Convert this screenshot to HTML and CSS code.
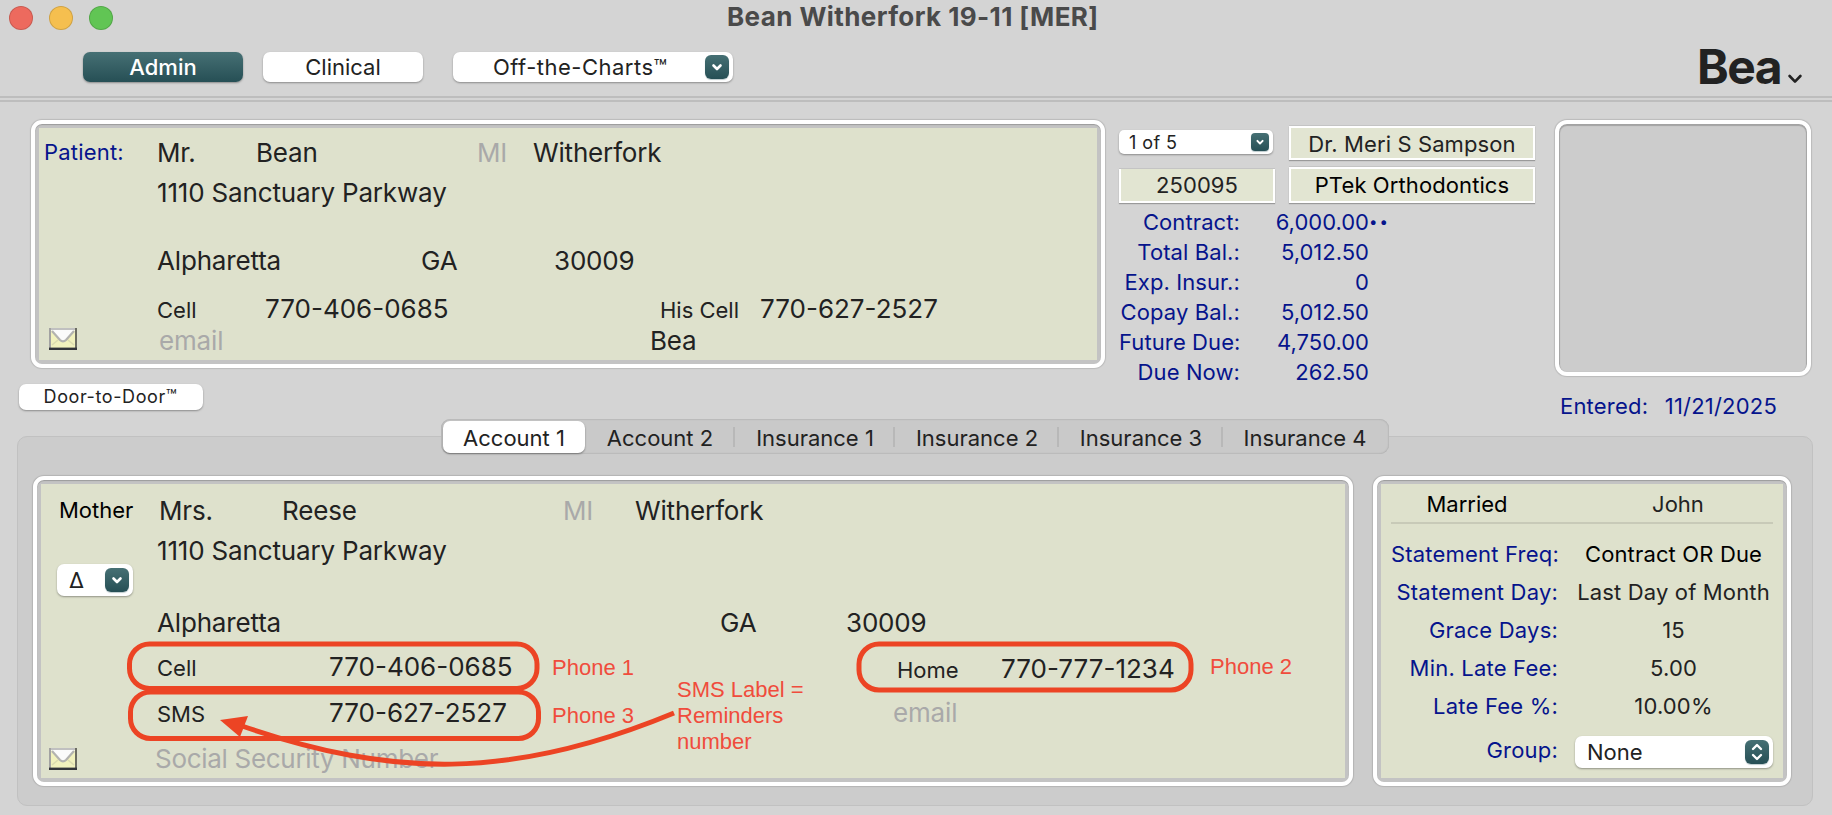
FILE: index.html
```html
<!DOCTYPE html>
<html lang="en">
  <head>
    <meta charset="UTF-8" />
    <title>Bean Witherfork 19-11 [MER]</title>
    <link rel="stylesheet" href="styles.css">
  </head>

  <body>
    <svg class="defs" width="0" height="0">
      <symbol id="chevron" viewBox="0 0 24 24">
        <path d="M8.500 10.500l3.500 3.500 3.500-3.500" fill="none" stroke="currentColor" stroke-width="2.6" stroke-linecap="round" stroke-linejoin="round" />
      </symbol>
      <symbol id="updown" viewBox="0 0 24 24">
        <path d="M8 9l4-4 4 4M8 15l4 4 4-4" fill="none" stroke="currentColor" stroke-width="2.4" stroke-linecap="round" stroke-linejoin="round" />
      </symbol>
      <symbol id="envelope" viewBox="0 0 28 22">
        <rect width="28" height="22" fill="#f1f1bd" />
        <path d="M2 2h24L16 13h-4z" fill="#fbfbfb" />
        <path d="M3 3l8 9q3 3 6 0l8-9" fill="none" stroke="#b3b3b0" stroke-width="2.2" />
        <path d="M3 17l6-5M25 17l-6-5" fill="none" stroke="#dcdcb0" stroke-width="1.6" />
        <path d="M0 1h28" stroke="#c0c0c0" stroke-width="2" />
        <path d="M1 0v22" stroke="#a2a2a2" stroke-width="2" />
        <path d="M27 0v22" stroke="#6c6c62" stroke-width="2" />
        <path d="M0 20.800h28" stroke="#33353a" stroke-width="2.4" />
      </symbol>
    </svg>

    <div class="window">
      <header class="titlebar">
        <div class="lights">
          <span class="light red"></span>
          <span class="light yellow"></span>
          <span class="light green"></span>
        </div>
        <h1>Bean Witherfork 19-11 [MER]</h1>
      </header>

      <nav class="toolbar">
        <button class="btn btn-active">Admin</button>
        <button class="btn">Clinical</button>
        <button class="btn btn-menu">
          <span>Off-the-Charts™</span>
          <svg class="arrow"><use href="#chevron" /></svg>
        </button>
        <div class="nickname">
          Bea
          <svg width="14" height="10" viewBox="0 0 14 10"><path d="M1.600 2L7 7.600 12.400 2" fill="none" stroke="#222" stroke-width="2.6" stroke-linecap="round" stroke-linejoin="round" /></svg>
        </div>
      </nav>

      <section class="top">
        <div class="card patient">
          <div class="panel">
            <div class="side">
              <span class="caption">Patient:</span>
              <svg class="envelope"><use href="#envelope" /></svg>
            </div>
            <div class="fields">
              <div class="row p-name">
                <span>Mr.</span>
                <span>Bean</span>
                <span class="hint">MI</span>
                <span>Witherfork</span>
              </div>
              <div class="row p-street"><span>1110 Sanctuary Parkway</span></div>
              <div class="row p-city">
                <span>Alpharetta</span>
                <span>GA</span>
                <span>30009</span>
              </div>
              <div class="row p-phone">
                <span class="small">Cell</span>
                <span class="num">770-406-0685</span>
                <span class="small">His Cell</span>
                <span class="num">770-627-2527</span>
              </div>
              <div class="row p-mail">
                <span class="hint">email</span>
                <span>Bea</span>
              </div>
            </div>
          </div>
        </div>

        <div class="summary">
          <div class="boxes">
            <div class="picker">
              <span>1 of 5</span>
              <svg class="arrow"><use href="#chevron" /></svg>
            </div>
            <div class="box">Dr. Meri S Sampson</div>
            <div class="box box-id">250095</div>
            <div class="box box-practice">PTek Orthodontics</div>
          </div>
          <dl class="money">
            <dt>Contract:</dt><dd>6,000.00<span class="dots">••</span></dd>
            <dt>Total Bal.:</dt><dd>5,012.50</dd>
            <dt>Exp. Insur.:</dt><dd>0</dd>
            <dt>Copay Bal.:</dt><dd>5,012.50</dd>
            <dt>Future Due:</dt><dd>4,750.00</dd>
            <dt>Due Now:</dt><dd>262.50</dd>
          </dl>
        </div>

        <div class="photo-col">
          <div class="photo"></div>
          <div class="entered"><span>Entered:</span><span>11/21/2025</span></div>
        </div>
      </section>

      <button class="btn btn-door">Door-to-Door™</button>

      <section class="accounts">
        <div class="tabs">
          <span class="tab tab-active">Account 1</span>
          <span class="tab tab-acc2">Account 2</span>
          <span class="tab tab-ins1">Insurance 1</span>
          <span class="tab">Insurance 2</span>
          <span class="tab">Insurance 3</span>
          <span class="tab">Insurance 4</span>
        </div>

        <div class="cards">
          <div class="card account">
            <div class="panel">
              <div class="side">
                <span class="relation">Mother</span>
                <div class="picker picker-delta">
                  <span>Δ</span>
                  <svg class="arrow"><use href="#chevron" /></svg>
                </div>
                <svg class="envelope"><use href="#envelope" /></svg>
              </div>
              <div class="fields">
                <div class="row a-name">
                  <span>Mrs.</span>
                  <span>Reese</span>
                  <span class="hint">MI</span>
                  <span>Witherfork</span>
                </div>
                <div class="row a-street"><span>1110 Sanctuary Parkway</span></div>
                <div class="row a-city">
                  <span>Alpharetta</span>
                  <span>GA</span>
                  <span>30009</span>
                </div>
                <div class="row a-phone">
                  <span class="small">Cell</span>
                  <span class="num">770-406-0685</span>
                  <span class="small low">Home</span>
                  <span class="num low">770-777-1234</span>
                </div>
                <div class="row a-sms">
                  <span class="small">SMS</span>
                  <span class="num">770-627-2527</span>
                  <span class="hint">email</span>
                </div>
                <div class="row a-ssn"><span class="hint">Social Security Number</span></div>
              </div>
            </div>
          </div>

          <div class="card billing">
            <div class="panel">
              <div class="marital">
                <span>Married</span>
                <span>John</span>
              </div>
              <dl class="terms">
                <dt>Statement Freq:</dt><dd class="strong">Contract OR Due</dd>
                <dt>Statement Day:</dt><dd>Last Day of Month</dd>
                <dt>Grace Days:</dt><dd>15</dd>
                <dt>Min. Late Fee:</dt><dd>5.00</dd>
                <dt>Late Fee %:</dt><dd>10.00%</dd>
              </dl>
              <div class="group">
                <span class="group-label">Group:</span>
                <div class="picker picker-group">
                  <span>None</span>
                  <svg class="arrow"><use href="#updown" /></svg>
                </div>
              </div>
            </div>
          </div>
        </div>
      </section>

      <!-- red markup drawn over the form -->
      <svg class="markup" width="1832" height="815" viewBox="0 0 1832 815">
        <g fill="none" stroke="#ec4424" stroke-width="5">
          <rect x="129.5" y="644" width="407.500" height="44.500" rx="20" />
          <rect x="130.500" y="692" width="408" height="46.500" rx="20" />
          <rect x="859" y="644" width="332" height="46" rx="20" />
          <path d="M242 726C390 777 510 781 674 713" />
        </g>
        <path d="M220 720l28-4-8 21z" fill="#ec4424" />
      </svg>
      <span class="note note-1">Phone 1</span>
      <span class="note note-2">Phone 2</span>
      <span class="note note-3">Phone 3</span>
      <span class="note note-sms">SMS Label =<br />Reminders<br />number</span>
    </div>
  </body>
</html>
```
FILE: styles.css
```css
:root {
  --window: #d4d4d4;
  --pane: #cccccc;
  --panel: #dee1cc;
  --ink: #222222;
  --navy: #06148c;
  --hint: #a9a9a9;
  --teal: linear-gradient(#467074, #264f55);
}

* {
  box-sizing: border-box;
}

html,
body {
  margin: 0;
  height: 100%;
  overflow: hidden;
}

body {
  background: var(--window);
  color: var(--ink);
  font-family: Inter, "Liberation Sans", sans-serif;
  font-size: 22px;
  white-space: nowrap;
}

.defs {
  position: absolute;
}

.window {
  position: relative;
  width: 1832px;
  height: 815px;
}

/* title bar */

.titlebar {
  display: flex;
  align-items: center;
  height: 36px;
}

.lights {
  display: flex;
  gap: 16px;
  width: 727px;
  padding-left: 9px;
}

.light {
  width: 24px;
  height: 24px;
  border-radius: 50%;
  border: 1px solid rgba(0, 0, 0, 0.15);
}

.red {
  background: #ed6a5e;
}

.yellow {
  background: #f5bf4f;
}

.green {
  background: #61c554;
}

.titlebar h1 {
  margin: 0 0 2px;
  font-size: 26px;
  line-height: 34px;
  font-weight: 700;
  letter-spacing: 0.4px;
  color: #4a4a4a;
}

/* toolbar */

.toolbar {
  display: flex;
  align-items: flex-start;
  height: 66px;
  padding: 16px 30px 0 83px;
  border-bottom: 2px solid #bdbdbd;
  background: linear-gradient(#bdbdbd, #bdbdbd) 0 60px / 100% 2px no-repeat;
}

.btn {
  width: 160px;
  height: 30px;
  margin: 0 20px 0 0;
  padding: 0;
  border: none;
  border-radius: 7px;
  background: #fff;
  box-shadow: 0 1px 2px rgba(0, 0, 0, 0.35);
  color: var(--ink);
  font: inherit;
  line-height: 30px;
}

.btn-active {
  background: var(--teal);
  color: #fff;
  font-weight: 500;
}

.btn-menu {
  display: flex;
  align-items: center;
  justify-content: space-between;
  width: 280px;
  margin-left: 10px;
  padding: 0 4px 0 40px;
  letter-spacing: 0.5px;
}

.arrow {
  flex: none;
  width: 24px;
  height: 24px;
  border-radius: 6px;
  background: var(--teal);
  box-shadow: 0 1px 1px rgba(38, 79, 85, 0.3);
  color: #fff;
}

.nickname {
  display: flex;
  align-items: flex-end;
  gap: 7px;
  height: 34px;
  margin-left: auto;
  font-size: 48px;
  font-weight: 700;
  line-height: 38px;
  letter-spacing: -1.6px;
}

.nickname svg {
  margin-bottom: 2px;
}

/* shared card look: white frame, grey gap, green panel */

.card {
  padding: 4px;
  border: 4px solid #fff;
  border-radius: 11px;
  background: #c3c3c3;
  box-shadow: 0 0 1px 1px rgba(0, 0, 0, 0.12), inset 0 1px 1px 0 rgba(0, 0, 0, 0.2);
}

.panel {
  height: 100%;
  background: var(--panel);
}

.row {
  display: flex;
  align-items: flex-start;
  height: 30px;
  font-size: 26px;
  line-height: 30px;
  letter-spacing: -0.17px;
}

.row > span {
  flex: none;
}

.small {
  font-size: 22px;
  line-height: 32px;
  letter-spacing: 0;
}

.num {
  letter-spacing: 0;
}

.low {
  padding-top: 2px;
}

.hint {
  color: var(--hint);
}

.envelope {
  width: 28px;
  height: 22px;
}

.top {
  display: flex;
  height: 276px;
  padding: 18px 21px 0 31px;
}

/* patient card */

.patient {
  width: 1074px;
  height: 248px;
}

.patient .panel,
.account .panel {
  display: flex;
}

.patient .side {
  display: flex;
  flex-direction: column;
  justify-content: space-between;
  width: 118px;
  padding: 9px 0 10px 5px;
}

.caption {
  color: var(--navy);
  line-height: 30px;
  letter-spacing: 0.2px;
}

.patient .envelope {
  margin-left: 5px;
}

.patient .fields {
  padding-top: 10px;
}

.p-name :nth-child(1) {
  width: 99px;
}

.p-name :nth-child(2) {
  width: 221px;
}

.p-name :nth-child(3) {
  width: 56px;
}

.p-street {
  margin-top: 10px;
}

.p-city {
  margin-top: 38px;
}

.p-city :nth-child(1) {
  width: 264px;
}

.p-city :nth-child(2) {
  width: 133px;
}

.p-phone {
  margin-top: 18px;
}

.p-phone :nth-child(1) {
  width: 108px;
}

.p-phone :nth-child(2) {
  width: 395px;
}

.p-phone :nth-child(3) {
  width: 100px;
}

.p-mail {
  margin-top: 2px;
}

.p-mail :nth-child(1) {
  width: 493px;
  padding-left: 2px;
}

/* balances */

.summary {
  width: 416px;
  margin-left: 14px;
  padding-top: 6px;
}

.boxes {
  display: grid;
  grid-template-columns: 156px 246px;
  grid-template-rows: 34px 36px;
  column-gap: 14px;
  row-gap: 7px;
}

.box {
  border: 2px solid #fff;
  background: #e2e5d2;
  box-shadow: 0 1px 1px 0 #9a9a9a, 0 -1px 0 #c4c4c4;
  line-height: 32px;
  text-align: center;
  letter-spacing: 0.1px;
}

/* the id field has no white edge on top */
.box-id {
  margin-top: 2px;
  border-top: none;
  line-height: 32px;
}

.box-practice {
  color: #000;
}

.picker {
  display: flex;
  align-items: center;
  justify-content: space-between;
  width: 154px;
  height: 24px;
  margin-top: 4px;
  padding: 0 4px 0 10px;
  border-radius: 5px;
  background: #fff;
  box-shadow: 0 1px 2px rgba(0, 0, 0, 0.35);
  font-size: 18px;
  letter-spacing: 0.4px;
}

.picker .arrow {
  width: 18px;
  height: 18px;
  border-radius: 4px;
}

.money {
  display: grid;
  grid-template-columns: 121px 129px;
  margin: 4px 0 0;
  color: var(--navy);
  line-height: 30px;
  text-align: right;
}

.money dd {
  position: relative;
  margin: 0;
}

.money dt {
  letter-spacing: 0.1px;
}

/* hangs past the right edge of the amount column */
.dots {
  position: absolute;
  left: 100%;
  font-size: 15px;
  letter-spacing: 2px;
}

.photo-col {
  width: 256px;
  margin-left: 20px;
}

.photo {
  height: 256px;
  border: 4px solid #fff;
  border-radius: 12px;
  background: var(--pane);
  box-shadow: 0 0 1px 1px rgba(0, 0, 0, 0.12), inset 0 1px 1px 1px rgba(0, 0, 0, 0.2);
}

.entered {
  display: flex;
  justify-content: space-between;
  padding: 15px 34px 0 5px;
  color: var(--navy);
  line-height: 30px;
  letter-spacing: 0.2px;
}

.btn-door {
  display: block;
  width: 184px;
  height: 26px;
  margin: 6px 0 0 19px;
  padding-right: 1px;
  font-size: 18px;
  line-height: 24px;
  letter-spacing: 0.6px;
}

/* tabs */

.accounts {
  height: 370px;
  margin: 26px 19px 0 17px;
  border: 1px solid #c1c1c1;
  border-radius: 10px;
  background: var(--pane);
}

.tabs {
  display: flex;
  width: 948px;
  height: 35px;
  margin: -18px 0 0 423px;
  padding: 2px;
  border-radius: 9px;
  background: #c9c9c9;
  box-shadow: inset 0 0 2px rgba(0, 0, 0, 0.25);
  line-height: 34px;
}

.tab {
  position: relative;
  width: 164px;
  text-align: center;
}

.tab-active {
  width: 142px;
  height: 32px;
  border-radius: 7px;
  background: #fff;
  box-shadow: 0 1px 2px rgba(0, 0, 0, 0.4);
}

.tab-acc2 {
  width: 150px;
}

.tab-ins1 {
  width: 160px;
}

.tab + .tab:not(:last-child)::after {
  content: "";
  position: absolute;
  right: 0;
  top: 6px;
  width: 2px;
  height: 20px;
  background: #b8b8b8;
}

.cards {
  display: flex;
  gap: 20px;
  height: 310px;
  margin: 22px 0 0 15px;
}

/* account card */

.account {
  width: 1320px;
}

.account .side {
  width: 116px;
  padding: 11px 0 0 8px;
}

.relation {
  display: block;
  padding-left: 10px;
  color: #000;
  line-height: 30px;
}

.picker-delta,
.picker-group {
  height: 32px;
  border-radius: 7px;
  font-size: 22px;
  letter-spacing: 0;
}

.picker-delta .arrow,
.picker-group .arrow {
  width: 24px;
  height: 24px;
  border-radius: 6px;
}

.picker-delta {
  width: 76px;
  margin: 39px 0 152px 8px;
  padding-left: 12px;
}

.account .fields {
  padding-top: 12px;
}

.a-name {
  padding-left: 2px;
}

.a-name :nth-child(1) {
  width: 123px;
}

.a-name :nth-child(2) {
  width: 281px;
}

.a-name :nth-child(3) {
  width: 72px;
}

.a-street {
  margin-top: 10px;
}

.a-city {
  margin-top: 42px;
}

.a-city :nth-child(1) {
  width: 563px;
}

.a-city :nth-child(2) {
  width: 126px;
}

.a-phone {
  margin-top: 14px;
}

.a-phone :nth-child(1),
.a-sms :nth-child(1) {
  width: 172px;
}

.a-phone :nth-child(2) {
  width: 568px;
}

.a-phone :nth-child(3) {
  width: 104px;
}

.a-sms {
  margin-top: 16px;
}

.a-sms :nth-child(2) {
  width: 564px;
}

.a-ssn {
  margin: 16px 0 0 -2px;
  letter-spacing: -0.3px;
}

/* billing card */

.billing {
  width: 418px;
}

.billing .panel {
  padding: 5px 10px 0;
}

.marital {
  display: flex;
  height: 35px;
  border-bottom: 2px solid #c8cab8;
  line-height: 30px;
}

.marital span {
  flex: none;
  width: 152px;
  text-align: center;
}

.marital :first-child {
  color: #000;
}

.marital :last-child {
  width: 270px;
}

.terms {
  display: grid;
  grid-template-columns: 167px 1fr;
  margin: 11px 0 0;
  line-height: 38px;
  letter-spacing: 0.15px;
}

.terms dt,
.group-label {
  color: var(--navy);
  text-align: right;
  letter-spacing: 0.2px;
}

.terms dd {
  margin: 0 -8px 0 8px;
  text-align: center;
}

.strong {
  color: #000;
}

.group {
  display: flex;
  justify-content: space-between;
  margin-top: 8px;
}

.group-label {
  width: 167px;
  line-height: 34px;
}

.picker-group {
  width: 198px;
  margin: 3px 0 0;
  padding-left: 12px;
}

/* markup layer */

.markup {
  position: absolute;
  left: 0;
  top: 0;
}

.note {
  position: absolute;
  color: #f04c3c;
  font-family: "Liberation Sans", Arial, sans-serif;
  font-size: 22px;
  line-height: 26px;
}

.note-1 {
  left: 552px;
  top: 655px;
}

.note-2 {
  left: 1210px;
  top: 654px;
}

.note-3 {
  left: 552px;
  top: 703px;
}

.note-sms {
  left: 677px;
  top: 677px;
}
```
